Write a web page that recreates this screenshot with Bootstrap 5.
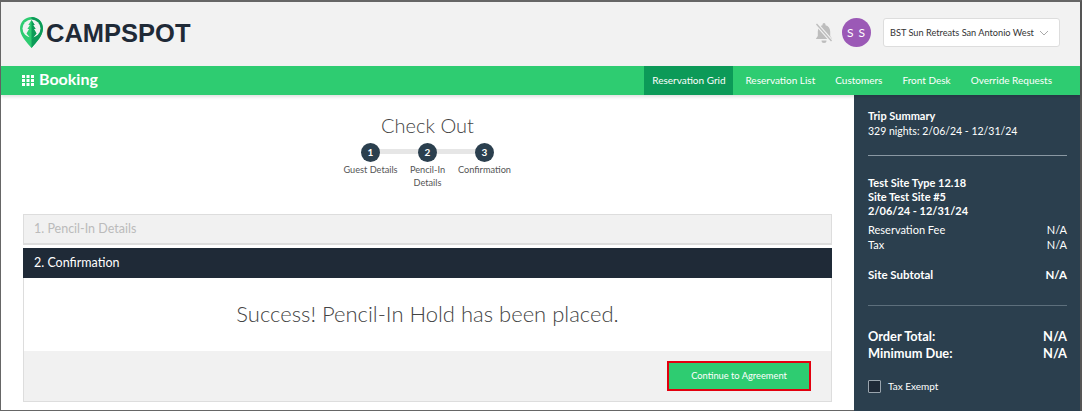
<!DOCTYPE html>
<html lang="en">
<head>
  <meta charset="UTF-8" />
  <title>Campspot Booking</title>
  <link href="https://cdn.jsdelivr.net/npm/bootstrap@5.3.0/dist/css/bootstrap.min.css" rel="stylesheet"/>
  <style>
    html, body {
      height: 411px;
      overflow: hidden;
    }
    body {
      font-family: Lato, "Open Sans", sans-serif;
      font-size: 11px;
      background: #fff;
    }
    .shell {
      height: 411px;
      border-top: 2px solid #666;
      border-left: 1px solid #666;
      border-right: 2px solid #555;
    }
    .top-head {
      height: 64px;
      background: #f2f2f2;
      padding: 0 20px 3px 18px;
    }
    .logo-word {
      font-family: "Liberation Sans", sans-serif;
      font-size: 25.500px;
      font-weight: 700;
      color: #1f2a37;
      margin: 2px 0 0 2px;
    }
    .avatar {
      width: 29px;
      height: 29px;
      background: #9b59b6;
      color: #fff;
      font-size: 12px;
      letter-spacing: 1px;
      white-space: nowrap;
    }
    .camp-select {
      width: 177px;
      height: 29px;
      margin-left: 12px;
      background: #fff;
      border: 1px solid #ddd;
      border-radius: 3px;
      color: #333;
      font-size: 9.200px;
      padding: 0 6px;
      white-space: nowrap;
    }
    .green-bar {
      height: 29px;
      background: #2ecc71;
      color: #fff;
      padding: 0 18px 0 21px;
      box-shadow: 0 2px 3px rgba(0,0,0,.12);
      position: relative;
    }
    .app-title {
      font-size: 16px;
      font-weight: 700;
      line-height: 1;
    }
    .app-title span {
      padding-bottom: 3px;
    }
    .top-link {
      color: #fff;
      text-decoration: none;
      font-size: 10px;
      padding: 0 10px;
      height: 29px;
      display: flex;
      align-items: center;
      white-space: nowrap;
    }
    .top-link.is-on {
      background: #0c9a58;
      padding: 0;
      width: 89px;
      justify-content: center;
      margin-right: 2px;
    }
    .page-main {
      height: 316px;
    }
    .left-pane {
      width: 853px;
      padding: 0 22px;
      border-bottom: 1px solid #666;
    }
    .side-pane {
      width: 226px;
      background: #2b3f4e;
      color: #fff;
      padding: 13px 13px 0 14px;
      line-height: 15px;
    }
    .side-pane .sub-line {
      font-size: 10.500px;
      margin-top: 1px;
    }
    .page-title {
      font-size: 20px;
      font-weight: 300;
      color: #444;
      text-align: center;
      margin: 18px 0 6px;
      line-height: 24px;
    }
    .step-wrap {
      width: 170px;
      margin: 0 auto;
      position: relative;
    }
    .step-line {
      position: absolute;
      top: 6px;
      left: 28px;
      right: 28px;
      height: 5px;
      background: #e6e6e6;
    }
    .step-item {
      width: 56px;
      text-align: center;
      color: #555;
      font-size: 9.200px;
      line-height: 13px;
      position: relative;
    }
    .step-num {
      width: 19px;
      height: 19px;
      background: #2b3f4e;
      color: #fff;
      font-size: 10px;
      font-weight: 700;
      margin: 0 auto 1px;
    }
    .step-item span {
      display: block;
      margin: 0 -8px;
    }
    .sec-head {
      height: 31px;
      padding-left: 10px;
      font-size: 12.500px;
      border: 1px solid #ddd;
      border-bottom-width: 2px;
      background: #f1f1f1;
      color: #bbb;
      margin-top: 25px;
    }
    .sec-head.is-on {
      height: 30px;
      margin-top: 3px;
      background: #1f2a37;
      border: 1px solid #1f2a37;
      color: #fff;
    }
    .sec-box {
      border: 1px solid #ddd;
      border-top: 0;
    }
    .sec-msg {
      height: 73px;
      padding-bottom: 2px;
      font-size: 22px;
      font-weight: 300;
      color: #444;
    }
    .sec-foot {
      height: 50px;
      background: #f1f1f1;
      padding-right: 20px;
    }
    .btn-cont {
      width: 144px;
      height: 30px;
      background: #2ecc71;
      color: #fff;
      font-size: 9.300px;
      border: 2px solid #e3000f;
      border-radius: 0;
      padding: 0;
    }
    .side-rule {
      border-top: 1px solid #8a98a3;
      opacity: 1;
      margin: 16px 0 20px;
    }
    .side-rule.dim {
      border-top-color: #5d6f7c;
      margin: 23px 0 22px;
    }
    .site-lines {
      line-height: 14px;
      margin-bottom: 4px;
    }
    .sub-total {
      font-size: 11.500px;
      margin-top: 15px;
    }
    .total-row {
      font-size: 12.800px;
      font-weight: 700;
      line-height: 17px;
    }
    .exempt-row {
      font-size: 10px;
      margin-top: 17px;
    }
    .fake-check {
      width: 13px;
      height: 13px;
      background: #1f2a37;
      border: 1px solid #9aa5ae;
      border-radius: 1px;
      margin-right: 7px;
    }
  </style>
</head>
<body>

<div class="shell">
  <header class="top-head d-flex align-items-center justify-content-between">
    <div class="d-flex align-items-center">
      <svg width="25" height="33" viewBox="0 0 25 33">
        <path d="M12.500 1C6 1 1 6 1 12.500c0 7 6.500 13.500 11.500 19.500C17.500 26 24 19.500 24 12.500 24 6 19 1 12.500 1z" fill="#2ecc71"/>
        <path d="M12.500 1C19 1 24 6 24 12.500c0 7-6.500 13.500-11.500 19.500z" fill="#0c9a58"/>
        <circle cx="12.500" cy="12.500" r="9" fill="#f2f2f2"/>
        <path d="M12.500 4l3.200 5h-1.600l2.500 4h-1.700l2.600 4.500-5 6-5-6 2.600-4.500H8.400l2.500-4H9.300z" fill="#2ecc71"/>
        <path d="M12.500 4l3.200 5h-1.600l2.500 4h-1.700l2.600 4.500-5 6z" fill="#0c9a58"/>
      </svg>
      <span class="logo-word">CAMPSPOT</span>
    </div>
    <div class="d-flex align-items-center">
      <svg width="20" height="24" viewBox="0 0 20 24">
        <path d="M10 2a1.500 1.500 0 0 1 1.500 1.500v.7c3 .7 4.700 3.300 4.700 6.300v4.500l2 3H1.800l2-3v-4.500c0-3 1.700-5.600 4.700-6.300v-.7A1.500 1.500 0 0 1 10 2z" fill="#bdbdbd"/>
        <path d="M7.500 19.500h5a2.500 2.500 0 0 1-5 0z" fill="#bdbdbd"/>
        <path d="M2.500 3l15 17" stroke="#f2f2f2" stroke-width="3.500"/>
        <path d="M2.500 3l15 17" stroke="#bdbdbd" stroke-width="1.300"/>
      </svg>
      <div class="avatar rounded-circle d-flex align-items-center justify-content-center ms-2">S S</div>
      <div class="camp-select d-flex align-items-center justify-content-between">
        <span>BST Sun Retreats San Antonio West</span>
        <svg class="me-1" width="10" height="6" viewBox="0 0 10 6"><path d="M1 1l4 4 4-4" fill="none" stroke="#aaa" stroke-width="1"/></svg>
      </div>
    </div>
  </header>

  <nav class="green-bar d-flex align-items-center justify-content-between">
    <div class="d-flex align-items-center gap-1 app-title">
      <svg width="13" height="11" viewBox="0 0 13 11" fill="#fff">
        <rect x="0" y="0" width="3" height="3"/><rect x="4.500" y="0" width="3" height="3"/><rect x="9" y="0" width="3" height="3"/>
        <rect x="0" y="4" width="3" height="3"/><rect x="4.500" y="4" width="3" height="3"/><rect x="9" y="4" width="3" height="3"/>
        <rect x="0" y="8" width="3" height="3"/><rect x="4.500" y="8" width="3" height="3"/><rect x="9" y="8" width="3" height="3"/>
      </svg>
      <span>Booking</span>
    </div>
    <div class="d-flex">
      <a class="top-link is-on" href="#">Reservation Grid</a>
      <a class="top-link" href="#">Reservation List</a>
      <a class="top-link" href="#">Customers</a>
      <a class="top-link" href="#">Front Desk</a>
      <a class="top-link" href="#">Override Requests</a>
    </div>
  </nav>

  <div class="page-main d-flex">
    <main class="left-pane">
      <h1 class="page-title">Check Out</h1>
      <div class="step-wrap d-flex justify-content-between">
        <div class="step-line"></div>
        <div class="step-item"><div class="step-num rounded-circle d-flex align-items-center justify-content-center">1</div><span>Guest Details</span></div>
        <div class="step-item"><div class="step-num rounded-circle d-flex align-items-center justify-content-center">2</div><span>Pencil-In<br>Details</span></div>
        <div class="step-item"><div class="step-num rounded-circle d-flex align-items-center justify-content-center">3</div><span>Confirmation</span></div>
      </div>
      <div class="sec-head d-flex align-items-center">1. Pencil-In Details</div>
      <div class="sec-head is-on d-flex align-items-center">2. Confirmation</div>
      <div class="sec-box">
        <div class="sec-msg d-flex align-items-center justify-content-center">Success! Pencil-In Hold has been placed.</div>
        <div class="sec-foot d-flex align-items-center justify-content-end">
          <button class="btn btn-cont" type="button">Continue to Agreement</button>
        </div>
      </div>
    </main>

    <aside class="side-pane">
      <div class="fw-bold">Trip Summary</div>
      <div class="sub-line">329 nights: 2/06/24 - 12/31/24</div>
      <hr class="side-rule">
      <div class="site-lines fw-bold">
        <div>Test Site Type 12.18</div>
        <div>Site Test Site #5</div>
        <div>2/06/24 - 12/31/24</div>
      </div>
      <div class="d-flex justify-content-between"><span>Reservation Fee</span><span>N/A</span></div>
      <div class="d-flex justify-content-between"><span>Tax</span><span>N/A</span></div>
      <div class="d-flex justify-content-between fw-bold sub-total"><span>Site Subtotal</span><span>N/A</span></div>
      <hr class="side-rule dim">
      <div class="d-flex justify-content-between total-row"><span>Order Total:</span><span>N/A</span></div>
      <div class="d-flex justify-content-between total-row"><span>Minimum Due:</span><span>N/A</span></div>
      <div class="d-flex align-items-center exempt-row"><span class="fake-check"></span><span>Tax Exempt</span></div>
    </aside>
  </div>
</div>

</body>
</html>
